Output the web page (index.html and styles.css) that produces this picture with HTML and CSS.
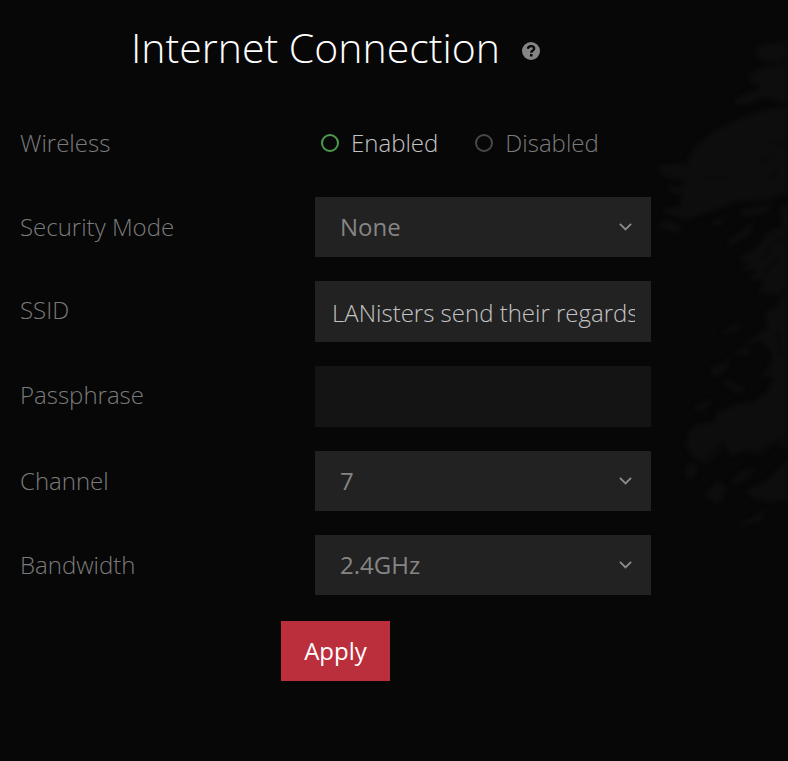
FILE: index.html
```
<!DOCTYPE html>
<html lang="en">
<head>
  <meta charset="UTF-8" />
  <meta name="viewport" content="width=device-width, initial-scale=1.0"/>
  <title>Internet Connection</title>
  <link rel="stylesheet" href="styles.css">
</head>
<body>
  <!-- faint rock on the right edge -->
  <svg class="backdrop" viewBox="0 0 148 520" aria-hidden="true">
    <g fill="#0d0d0d">
      <path d="M148 20 L120 25 L114 32 L120 40 L135 43 L148 38 Z"/>
      <path d="M148 42 L130 46 L120 49 L107 54 L112 63 L120 67 L96 79 L94 85 L108 84 L126 77 L148 84 Z"/>
      <path d="M148 86 L124 90 L96 100 L76 110 L58 123 L49 136 L47 143 L17 145 L23 156 L44 161 L43 166 L28 166 L32 173 L42 174 L40 186 L22 188 L29 195 L49 200 L62 194 L80 189 L96 182 L120 181 L148 173 Z"/>
      <path d="M16 208 L27 199 L43 208 L36 214 L27 210 Z"/>
      <path d="M70 204 L88 194 L80 206 Z M100 190 L134 183 L124 194 L104 197 Z"/>
      <path d="M86 222 L108 206 L116 202 L108 216 L91 226 Z"/>
      <path d="M148 184 L140 190 L143 208 L130 210 L116 228 L98 238 L108 244 L100 252 L118 250 L109 259 L124 262 L118 272 L137 276 L148 264 Z"/>
      <path d="M148 264 L136 286 L124 294 L128 308 L112 318 L101 324 L122 322 L132 332 L130 344 L121 358 L134 356 L126 372 L148 368 Z"/>
      <path d="M81 313 L98 303 L102 306 L90 314 Z M92 333 L112 325 L108 335 Z"/>
      <path d="M69 348 L86 342 L92 334 L86 350 L74 358 Z M82 358 L92 362 L106 369 L98 374 L86 366 Z"/>
      <path d="M54 386 L76 378 L66 388 L56 391 Z"/>
      <path d="M148 364 L128 372 L112 382 L96 384 L78 392 L72 402 L56 404 L48 414 L45 426 L54 438 L66 444 L80 434 L84 424 L90 436 L108 430 L122 436 L134 424 L148 430 Z"/>
      <path d="M46 446 L56 442 L58 452 L50 460 L46 458 Z M64 474 L78 461 L86 468 L82 480 L76 484 Z"/>
      <path d="M91 462 L100 452 L116 448 L108 458 L94 466 Z M106 470 L124 462 L148 440 L148 480 L128 482 L112 478 Z"/>
      <path d="M94 504 L112 498 L124 490 L122 500 L108 504 Z"/>
    </g>
    <g fill="none" stroke="#080808" stroke-width="2">
      <path d="M148 124 L130 122 M120 144 L134 134 M138 150 L128 158"/>
      <path d="M62 158 L88 158"/>
      <path d="M148 216 L130 226 L122 240 M138 240 L124 254"/>
      <path d="M110 440 L130 424 L148 418 M66 440 L84 422"/>
      <path d="M138 312 L140 336"/>
    </g>
  </svg>

  <main class="panel">
    <header class="panel-header">
      <h1>Internet Connection</h1>
      <button type="button" class="help" aria-label="Help">
        <svg viewBox="0 0 18 18" width="18" height="18">
          <circle cx="9" cy="9" r="9" fill="#858585"/>
          <path d="M5.8 6.8 C6.2 4.6 7.5 4.1 9 4.1 C10.8 4.1 12.2 5.1 12.2 6.6 C12.2 8.6 9.2 8.5 9.2 10.8" fill="none" stroke="#070707" stroke-width="2.3"/>
          <rect x="8" y="12" width="2.5" height="2.5" fill="#070707"/>
        </svg>
      </button>
    </header>

    <form>
      <div class="row" role="radiogroup" aria-labelledby="wireless">
        <span class="name" id="wireless">Wireless</span>
        <div class="radios">
          <label><input type="radio" name="wireless" value="on" checked><span>Enabled</span></label>
          <label><input type="radio" name="wireless" value="off"><span>Disabled</span></label>
        </div>
      </div>

      <div class="row">
        <label class="name" for="security">Security Mode</label>
        <div class="select">
          <select id="security">
            <option>None</option>
            <option>WPA2</option>
          </select>
          <svg class="arrow" viewBox="0 0 14 8"><path d="M1 1 L7 7 L13 1"/></svg>
        </div>
      </div>

      <div class="row row-text">
        <label class="name" for="ssid">SSID</label>
        <input class="field" id="ssid" type="text" value="LANisters send their regards">
      </div>

      <div class="row row-text">
        <label class="name" for="passphrase">Passphrase</label>
        <input class="field" id="passphrase" type="password" disabled>
      </div>

      <div class="row">
        <label class="name" for="channel">Channel</label>
        <div class="select">
          <select id="channel">
            <option>1</option>
            <option selected>7</option>
            <option>11</option>
          </select>
          <svg class="arrow" viewBox="0 0 14 8"><path d="M1 1 L7 7 L13 1"/></svg>
        </div>
      </div>

      <div class="row">
        <label class="name" for="bandwidth">Bandwidth</label>
        <div class="select">
          <select id="bandwidth">
            <option>2.4GHz</option>
            <option>5GHz</option>
          </select>
          <svg class="arrow" viewBox="0 0 14 8"><path d="M1 1 L7 7 L13 1"/></svg>
        </div>
      </div>

      <button type="submit" class="apply">Apply</button>
    </form>
  </main>
</body>
</html>
```
FILE: styles.css
```
* {
  box-sizing: border-box;
  margin: 0;
  padding: 0;
}
body {
  min-height: 100vh;
  background: #070707;
  color: #7b7b7b;
  font-family: 'Open Sans', 'Noto Sans', sans-serif;
  font-size: 24px;
  font-weight: 300;
  line-height: 32px;
}
.backdrop {
  position: absolute;
  top: 20px;
  right: 0;
  width: 148px;
  filter: blur(2px);
}
.panel {
  position: relative;
  max-width: 671px;
  padding: 19px 20px;
}
.panel-header {
  display: flex;
  justify-content: center;
  align-items: center;
  gap: 22px;
  margin-bottom: 38px;
}
h1 {
  color: #fff;
  font-size: 41px;
  font-weight: 300;
  line-height: 56px;
}
.help {
  display: flex;
  margin-top: 8px;
  background: none;
  border: none;
  cursor: pointer;
}
form {
  display: flex;
  flex-direction: column;
  gap: 24px;
}
.row {
  display: grid;
  grid-template-columns: 295px 1fr;
  align-items: center;
  min-height: 60px;
}
.row-text .name {
  padding-bottom: 4px;
}
.radios {
  display: flex;
  gap: 37px;
  padding-left: 6px;
}
.radios label {
  display: flex;
  align-items: center;
  gap: 12px;
  cursor: pointer;
}
.radios input {
  appearance: none;
  width: 18px;
  height: 18px;
  border: 2px solid #484848;
  border-radius: 50%;
}
.radios input:checked {
  border-color: #4f9a4f;
}
.radios input:checked + span {
  color: #c4c4c4;
}
.select {
  display: grid;
  align-items: center;
}
select, .field {
  width: 100%;
  min-width: 0;
  background: #222;
  border: none;
  border-radius: 0;
  font: inherit;
}
select {
  grid-area: 1 / 1;
  appearance: none;
  height: 60px;
  padding: 0 44px 0 25px;
  color: #858585;
  font-weight: 400;
}
.arrow {
  grid-area: 1 / 1;
  justify-self: end;
  width: 13px;
  margin-right: 19px;
  fill: none;
  stroke: #8c8c8c;
  stroke-width: 2;
  pointer-events: none;
}
.field {
  height: 61px;
  padding: 2px 16px 0 17px;
  color: #c4c4c4;
}
.field:disabled {
  background: #141414;
}
.apply {
  align-self: center;
  height: 60px;
  margin-top: 2px;
  padding: 0 23px;
  background: #bb2e3b;
  color: #fff;
  border: none;
  font: inherit;
  font-weight: 400;
  cursor: pointer;
}
```
